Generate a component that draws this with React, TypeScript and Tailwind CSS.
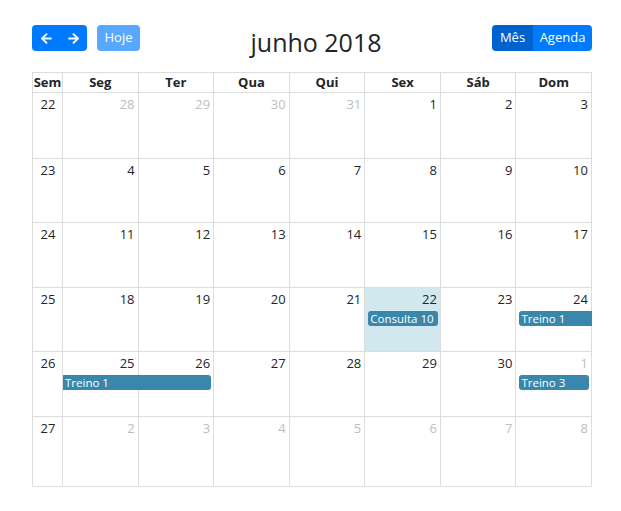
import React from "react";
import { ArrowLeft, ArrowRight } from "lucide-react";

type Day = { n: number; other?: boolean; today?: boolean };
type Ev = { label: string; col: string; roundL?: boolean; roundR?: boolean };
type Week = { num: number; h: string; days: Day[]; events: Ev[] };

const dayNames = ["Seg", "Ter", "Qua", "Qui", "Sex", "Sáb", "Dom"];

const range = (a: number, b: number, other = false): Day[] =>
  Array.from({ length: b - a + 1 }, (_, i) => ({ n: a + i, other }));

const weeks: Week[] = [
  { num: 22, h: "h-[66px]", days: [...range(28, 31, true), ...range(1, 3)], events: [] },
  { num: 23, h: "h-[64px]", days: range(4, 10), events: [] },
  { num: 24, h: "h-[65px]", days: range(11, 17), events: [] },
  {
    num: 25,
    h: "h-[64px]",
    days: range(18, 24).map((d) => (d.n === 22 ? { ...d, today: true } : d)),
    events: [
      { label: "Consulta 10", col: "col-start-6 col-span-1", roundL: true, roundR: true },
      { label: "Treino 1", col: "col-start-8 col-span-1", roundL: true },
    ],
  },
  {
    num: 26,
    h: "h-[65px]",
    days: [...range(25, 30), { n: 1, other: true }],
    events: [
      { label: "Treino 1", col: "col-start-2 col-span-2", roundR: true },
      { label: "Treino 3", col: "col-start-8 col-span-1", roundL: true, roundR: true },
    ],
  },
  { num: 27, h: "h-[70px]", days: range(2, 8, true), events: [] },
];

const colStarts = ["col-start-2", "col-start-3", "col-start-4", "col-start-5", "col-start-6", "col-start-7", "col-start-8"];

export default function App() {
  return (
    <div className="w-[621px] h-[511px] bg-white text-[#212529] font-['Open_Sans',sans-serif] pl-[32px] pr-[29px] pt-[25px]">
      {/* Toolbar */}
      <div className="flex items-start justify-between h-[26px] mb-[21px]">
        <div className="flex items-center">
          <div className="flex">
            <button className="h-[26px] w-[28px] bg-[#007bff] text-white rounded-l-[4px] flex items-center justify-center">
              <ArrowLeft size={15} strokeWidth={3} />
            </button>
            <button className="h-[26px] w-[27px] bg-[#007bff] text-white rounded-r-[4px] flex items-center justify-center">
              <ArrowRight size={15} strokeWidth={3} />
            </button>
          </div>
          <button className="ml-[10px] h-[26px] w-[43px] bg-[#007bff] opacity-65 text-white text-[13px] rounded-[4px]">
            Hoje
          </button>
        </div>
        <h2 className="mt-[4px] text-[25px] leading-[26px] font-normal">junho 2018</h2>
        <div className="flex">
          <button className="h-[26px] w-[41px] bg-[#0062cc] text-white text-[13px] rounded-l-[4px]">Mês</button>
          <button className="h-[26px] w-[59px] bg-[#007bff] text-white text-[13px] rounded-r-[4px]">Agenda</button>
        </div>
      </div>

      {/* Calendar */}
      <div className="w-[560px] border-t border-l border-[#dddddd]">
        <div className="grid grid-cols-[30px_repeat(7,1fr)] h-[20px]">
          <div className="border-r border-b border-[#dddddd] text-[13px] font-bold leading-[19px] text-center">Sem</div>
          {dayNames.map((d) => (
            <div key={d} className="border-r border-b border-[#dddddd] text-[13px] font-bold leading-[19px] text-center">
              {d}
            </div>
          ))}
        </div>

        {weeks.map((w) => (
          <div key={w.num} className={`grid grid-cols-[30px_repeat(7,1fr)] grid-rows-[auto_auto_1fr] ${w.h}`}>
            <div className="col-start-1 row-start-1 row-span-3 border-r border-b border-[#dddddd]" />
            {w.days.map((d, i) => (
              <div
                key={i}
                className={`${colStarts[i]} row-start-1 row-span-3 border-r border-b border-[#dddddd] ${d.today ? "bg-[#d1e9ee]" : ""}`}
              />
            ))}
            <div className="col-start-1 row-start-1 text-[13px] leading-[18px] text-center pt-[2px]">{w.num}</div>
            {w.days.map((d, i) => (
              <div
                key={"n" + i}
                className={`${colStarts[i]} row-start-1 text-[13px] leading-[18px] text-right pt-[2px] pr-[4px] ${d.other ? "text-[#bcbec0]" : ""}`}
              >
                {d.n}
              </div>
            ))}
            {w.events.map((e, i) => (
              <div
                key={"e" + i}
                className={`${e.col} row-start-2 mt-[3px] h-[15px] bg-[#3a87ad] text-white text-[11.5px] leading-[15px] pl-[2px] whitespace-nowrap overflow-hidden ${
                  e.roundL ? "ml-[3px] rounded-l-[3px]" : ""
                } ${e.roundR ? "mr-[3px] rounded-r-[3px]" : ""}`}
              >
                {e.label}
              </div>
            ))}
          </div>
        ))}
      </div>
    </div>
  );
}
